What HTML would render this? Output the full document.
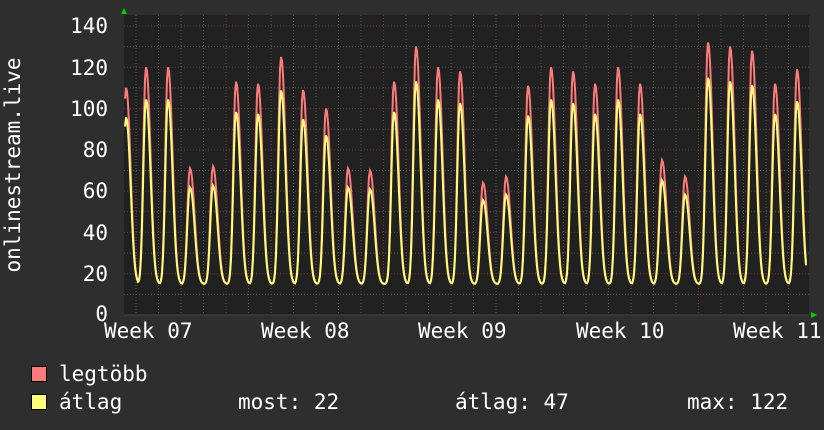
<!DOCTYPE html><html><head><style>
body{margin:0;background:#2e2e2e;width:824px;height:430px;overflow:hidden;font-family:"DejaVu Sans Mono","Liberation Mono",monospace;color:#fff}
.t{position:absolute;font-size:21px;line-height:22px;white-space:pre}
.y{position:absolute;font-size:21px;line-height:22px;right:716px;text-align:right}
.sq{position:absolute;width:14px;height:14px;border:1px solid #000}
</style></head><body>
<svg id="s" width="824" height="430" style="position:absolute;left:0;top:0"></svg>
<div class="y" style="top:15px">140</div>
<div class="y" style="top:57px">120</div>
<div class="y" style="top:98px">100</div>
<div class="y" style="top:139px">80</div>
<div class="y" style="top:180px">60</div>
<div class="y" style="top:222px">40</div>
<div class="y" style="top:263px">20</div>
<div class="y" style="top:303px">0</div>
<div class="t" style="left:104px;top:320px">Week 07</div>
<div class="t" style="left:261px;top:320px">Week 08</div>
<div class="t" style="left:418px;top:320px">Week 09</div>
<div class="t" style="left:576px;top:320px">Week 10</div>
<div class="t" style="left:733px;top:320px">Week 11</div>
<div class="t" style="left:-97px;top:154px;transform:rotate(-90deg);width:220px;text-align:center">onlinestream.live</div>
<div class="sq" style="left:31px;top:366px;background:#ff7b7b"></div>
<div class="sq" style="left:31px;top:394px;background:#ffff7b"></div>
<div class="t" style="left:59px;top:363px">legtöbb</div>
<div class="t" style="left:59px;top:391px">átlag</div>
<div class="t" style="left:238px;top:391px">most: 22</div>
<div class="t" style="left:455px;top:391px">átlag: 47</div>
<div class="t" style="left:687px;top:391px">max: 122</div>
<script>
var s=document.getElementById('s'),h='';
var L=124,R=809,T=15,B=315,k=289/140;
h+='<rect x="'+L+'" y="'+T+'" width="'+(R-L)+'" height="'+(B-T)+'" fill="#212121"/>';
for(var v=10;v<=140;v+=10){var y=B-v*k;h+='<line x1="'+L+'" x2="'+R+'" y1="'+y+'" y2="'+y+'" stroke="'+(v%20?'#555':'#6a3a3a')+'" stroke-dasharray="1,2"/>';}
for(var x=226-22.5*4;x<R;x+=22.5){if(x<L)continue;var maj=Math.abs(((x-226)/157.5)-Math.round((x-226)/157.5))<0.01;h+='<line x1="'+x+'" x2="'+x+'" y1="'+T+'" y2="'+B+'" stroke="'+(maj?'#6a3a3a':'#555')+'" stroke-dasharray="1,2"/>';}
var pk=[[126,110],[146,120],[168,120],[190,71],[213,72],[236,113],[258,112],[281,125],[303,109],[326,100],[348,71],[370,70],[394,113],[416,130],[438,120],[460,118],[483,64],[506,67],[528,111],[551,120],[573,118],[595,112],[618,120],[640,112],[662,75],[685,67],[708,132],[730,130],[752,128],[775,112],[797,119]];
function val(x,a){var best=15;for(var i=0;i<pk.length;i++){var d=x-pk[i][0],p=pk[i][1]*a;var w=d<0?3:5;var f=Math.exp(-Math.pow(Math.abs(d)/w,2.2)/1.6);var b=15+(p-15)*f;if(b>best)best=b;}return best;}
function line(a,c){var d='';for(var x=L+1;x<=R-3;x+=1){var y=B-val(x,a)*k;d+=(d?'L':'M')+x.toFixed(1)+' '+y.toFixed(1);}return '<path d="'+d+'" fill="none" stroke="'+c+'" stroke-width="2"/>';}
h+=line(1,'#ff7b7b');h+=line(0.87,'#ffff7b');
h+='<line x1="'+L+'" x2="'+R+'" y1="'+B+'" y2="'+B+'" stroke="#444"/>';
h+='<polygon points="121,14 127,14 124,8" fill="#0c0"/><polygon points="811,312 811,318 817,315" fill="#0c0"/>';
s.innerHTML=h;
</script>
</body></html>
